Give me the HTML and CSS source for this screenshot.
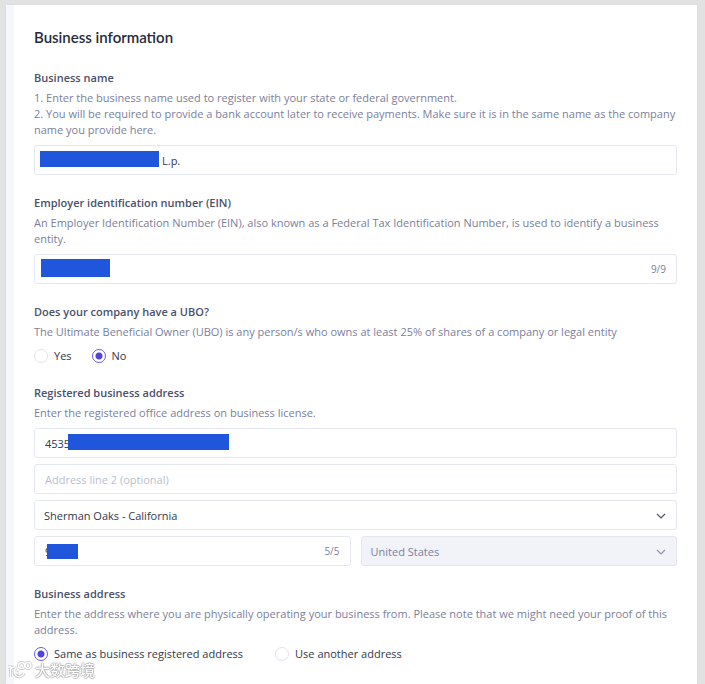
FILE: index.html
```html
<!DOCTYPE html>
<html lang="en">
<head>
<meta charset="utf-8">
<meta name="viewport" content="width=device-width, initial-scale=1">
<title>Business information</title>
<link rel="stylesheet" href="styles.css">
</head>
<body>
<main class="panel">
  <form class="form">
    <h1 class="title">Business information</h1>

    <section class="group">
      <label class="label" for="name">Business name</label>
      <p class="help">1. Enter the business name used to register with your state or federal government.<br>2. You will be required to provide a bank account later to receive payments. Make sure it is in the same name as the company name you provide here.</p>
      <div class="field">
        <input class="control control-name" id="name" type="text" value="L.p.">
        <span class="mask mask-name"></span>
      </div>
    </section>

    <section class="group">
      <label class="label" for="ein">Employer identification number (EIN)</label>
      <p class="help">An Employer Identification Number (EIN), also known as a Federal Tax Identification Number, is used to identify a business entity.</p>
      <div class="field">
        <input class="control" id="ein" type="text">
        <span class="mask mask-ein"></span>
        <span class="count">9/9</span>
      </div>
    </section>

    <section class="group" role="radiogroup" aria-labelledby="ubo">
      <h2 class="label" id="ubo">Does your company have a UBO?</h2>
      <p class="help">The Ultimate Beneficial Owner (UBO) is any person/s who owns at least 25% of shares of a company or legal entity</p>
      <div class="choices choices-short">
        <label class="choice"><input class="radio" type="radio" name="ubo">Yes</label>
        <label class="choice"><input class="radio" type="radio" name="ubo" checked>No</label>
      </div>
    </section>

    <section class="group">
      <h2 class="label">Registered business address</h2>
      <p class="help">Enter the registered office address on business license.</p>
      <div class="stack">
        <div class="field">
          <input class="control" type="text" value="4535" aria-label="Address line 1">
          <span class="mask mask-street"></span>
        </div>
        <div class="field">
          <input class="control" type="text" placeholder="Address line 2 (optional)" aria-label="Address line 2">
        </div>
        <div class="field">
          <select class="control" aria-label="City and state"><option>Sherman Oaks - California</option></select>
          <svg class="chevron" viewBox="0 0 10 6" aria-hidden="true"><path d="M1 1l4 4 4-4"/></svg>
        </div>
        <div class="pair">
          <div class="field">
            <input class="control" type="text" value="9" aria-label="ZIP code">
            <span class="mask mask-zip"></span>
            <span class="count">5/5</span>
          </div>
          <div class="field">
            <select class="control" aria-label="Country" disabled><option>United States</option></select>
            <svg class="chevron chevron-muted" viewBox="0 0 10 6" aria-hidden="true"><path d="M1 1l4 4 4-4"/></svg>
          </div>
        </div>
      </div>
    </section>

    <section class="group" role="radiogroup" aria-labelledby="place">
      <h2 class="label" id="place">Business address</h2>
      <p class="help">Enter the address where you are physically operating your business from. Please note that we might need your proof of this address.</p>
      <div class="choices">
        <label class="choice"><input class="radio" type="radio" name="place" checked>Same as business registered address</label>
        <label class="choice"><input class="radio" type="radio" name="place">Use another address</label>
      </div>
    </section>
  </form>
</main>
<div class="watermark">
  <svg class="watermark-logo" viewBox="0 0 27 18" aria-hidden="true">
    <defs>
      <g id="mark"><path d="M2 6h2.500v10M4.500 8.500Q5.500 6 8 6M10.500 6.500a5 5 0 1 0 7.500 5.500M10 9.500v2.500h3"/><circle cx="15.500" cy="4.500" r="3"/><circle cx="22" cy="4.500" r="3"/></g>
    </defs>
    <use class="logo-edge" href="#mark"/>
    <use class="logo-fill" href="#mark"/>
  </svg>
  <span lang="zh">大数跨境</span>
</div>
</body>
</html>
```
FILE: styles.css
```css
* {
  box-sizing: border-box;
}

body {
  margin: 0;
  padding: 5px 8px 0 6px;
  min-height: 100vh;
  display: flex;
  background: #e2e2e3;
  color: #343849;
  font-family: "Open Sans", "Liberation Sans", sans-serif;
  font-size: 11px;
}

.panel {
  flex: 1;
  background: #fff;
  border-left: 8px solid #f6f6fd;
  box-shadow: 0 0 2px #d4d4d8;
}

.form {
  padding: 20px 20px 0;
  display: flex;
  flex-direction: column;
  gap: 18px;
}

.title {
  margin: 0;
  font-family: "Lato", "Liberation Sans", sans-serif;
  font-size: 15px;
  line-height: 25px;
  font-weight: 600;
  color: #262a3d;
}

.group {
  display: flex;
  flex-direction: column;
}

.label {
  margin: 0 0 2px;
  font-size: 11px;
  line-height: 20px;
  font-weight: 600;
  color: #4b506b;
}

.help {
  margin: 0 0 7px;
  line-height: 16px;
  color: #7b809c;
}

.field {
  position: relative;
  display: flex;
}

.control {
  appearance: none;
  flex: 1;
  min-width: 0;
  height: 30px;
  margin: 0;
  padding: 0 10px;
  border: 1px solid #e4e6f2;
  border-radius: 3px;
  background: #fff;
  color: #343849;
  font: inherit;
  opacity: 1;
}

select.control {
  padding: 0 9px;
}

.control-name {
  padding-left: 127px;
}

.control::placeholder {
  color: #b9bed0;
}

.control:disabled {
  background: #f2f3f9;
  color: #7b809c;
}

.mask {
  position: absolute;
  background: #2056db;
}

.mask-name {
  left: 6px;
  top: 6px;
  width: 119px;
  height: 16px;
}

.mask-ein {
  left: 7px;
  top: 5px;
  width: 69px;
  height: 18px;
}

.mask-street {
  left: 34px;
  top: 6px;
  width: 161px;
  height: 16px;
}

.mask-zip {
  left: 13px;
  top: 8px;
  width: 31px;
  height: 15px;
}

.count {
  position: absolute;
  right: 11px;
  top: 0;
  font-size: 10px;
  line-height: 30px;
  color: #7b809c;
}

.chevron {
  position: absolute;
  right: 11px;
  top: 13px;
  width: 10px;
  height: 6px;
  fill: none;
  stroke: #4f5365;
  stroke-width: 1.2;
  pointer-events: none;
}

.chevron-muted {
  stroke: #8f94aa;
}

.stack {
  display: flex;
  flex-direction: column;
  gap: 6px;
}

.pair {
  display: grid;
  grid-template-columns: 1fr 1fr;
  gap: 10px;
}

.choices {
  display: flex;
  gap: 32px;
}

.choices-short {
  gap: 20px;
}

.choice {
  display: flex;
  align-items: center;
  gap: 6px;
  line-height: 18px;
}

.radio {
  appearance: none;
  width: 14px;
  height: 14px;
  margin: 0;
  border: 1px solid #e1e3f0;
  border-radius: 50%;
  background: #fff;
}

.radio:checked {
  border-color: #6a5fe0;
  background: radial-gradient(circle, #5244d8 3px, #fff 4px);
}

.watermark {
  position: fixed;
  left: 6px;
  bottom: 5px;
  display: flex;
  align-items: center;
  gap: 2px;
  color: #fff;
  font-family: "Noto Sans CJK SC", sans-serif;
  font-size: 15px;
  line-height: 18px;
  text-shadow: 1px 0 1px #bbb, -1px 0 1px #bbb, 0 1px 1px #bbb, 0 -1px 1px #bbb;
}

.watermark-logo {
  width: 27px;
  height: 18px;
  fill: none;
  overflow: visible;
}

.logo-edge {
  stroke: #c4c4c8;
  stroke-width: 3;
}

.logo-fill {
  stroke: #fff;
  stroke-width: 1.5;
}
```
